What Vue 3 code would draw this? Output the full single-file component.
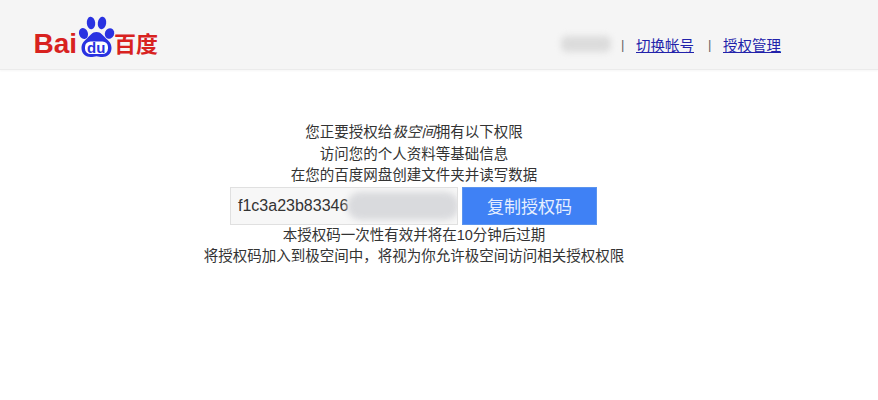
<script setup>
const lines = ['访问您的个人资料等基础信息', '在您的百度网盘创建文件夹并读写数据']
</script>

<template>
  <div class="page">
    <header class="header">
      <svg class="logo" width="128" height="48" viewBox="0 0 128 48">
        <text x="0.5" y="41" class="logo-red" font-size="28">Bai</text>
        <g fill="#2932e1">
          <ellipse cx="50.5" cy="21.5" rx="4.4" ry="5.6" transform="rotate(-20 50.5 21.5)" />
          <ellipse cx="58" cy="11" rx="4.2" ry="6.2" transform="rotate(-6 58 11)" />
          <ellipse cx="69" cy="11" rx="4.2" ry="6.2" transform="rotate(8 69 11)" />
          <ellipse cx="76.5" cy="21.5" rx="4.6" ry="5.4" transform="rotate(22 76.5 21.5)" />
          <path d="M63.5 20c4.5 0 6.500 3.500 9.500 6.500 3 2.500 5.500 5 5.500 9.500 0 6-4.500 9-9 9-2.500 0-4-.8-6-.8s-3.500.8-6 .8c-4.500 0-9-3-9-9 0-4.500 2.500-7 5.500-9.500 3-3 5-6.500 9.500-6.500z" />
        </g>
        <rect x="52" y="29.500" width="23" height="12.500" rx="5.500" fill="#fff" />
        <text x="54" y="40.500" class="logo-du" font-size="15">du</text>
        <text x="81" y="40" class="logo-cn" font-size="22">百度</text>
      </svg>
      <nav class="nav">
        <span class="user-blur"></span>
        <span class="sep">|</span>
        <a class="link">切换帐号</a>
        <span class="sep">|</span>
        <a class="link">授权管理</a>
      </nav>
    </header>

    <main class="main">
      <p class="line">您正要授权给<em class="app">极空间</em>拥有以下权限</p>
      <p v-for="l in lines" :key="l" class="line">{{ l }}</p>
      <div class="code-row">
        <div class="code-box">
          <span class="code">f1c3a23b83346</span>
          <span class="code-blur"></span>
        </div>
        <button class="copy">复制授权码</button>
      </div>
      <p class="line">本授权码一次性有效并将在10分钟后过期</p>
      <p class="line">将授权码加入到极空间中，将视为你允许极空间访问相关授权权限</p>
    </main>
  </div>
</template>

<style scoped>
.page {
  width: 878px;
  height: 400px;
  background: #fff;
  overflow: hidden;
  font-family: "Liberation Sans", "Noto Sans CJK SC", sans-serif;
  color: #333;
  font-size: 14.5px;
}
.header {
  height: 69px;
  box-sizing: content-box;
  background: #f5f5f5;
  border-bottom: 1px solid #ebebeb;
  box-shadow: 0 1px 2px rgba(0, 0, 0, 0.04);
  display: flex;
  align-items: flex-start;
  justify-content: space-between;
  padding-left: 33px;
  padding-right: 97px;
}
.logo {
  margin-top: 12px;
  display: block;
}
.logo-red {
  font-family: "Liberation Sans", sans-serif;
  font-weight: 700;
  fill: #d8221f;
}
.logo-du {
  font-family: "Liberation Sans", sans-serif;
  font-weight: 700;
  fill: #2932e1;
}
.logo-cn {
  font-family: "Noto Sans CJK SC", sans-serif;
  font-weight: 700;
  fill: #d8221f;
}
.nav {
  display: flex;
  align-items: center;
  height: 20px;
  margin-top: 34px;
  position: relative;
}
.user-blur {
  width: 50px;
  height: 16px;
  border-radius: 6px;
  background: #dcdcdc;
  filter: blur(3px);
  margin-right: 10px;
}
.sep {
  color: #666;
  width: 14px;
  margin-right: 1px;
  font-size: 13px;
}
.sep + .link + .sep {
  margin-left: 14px;
}
.link {
  color: #2222aa;
  text-decoration: underline;
}
.main {
  display: flex;
  flex-direction: column;
  align-items: center;
  padding-top: 52px;
  padding-right: 50px;
}
.line {
  margin: 0;
  height: 21.6px;
  line-height: 21.6px;
  white-space: nowrap;
}
.app {
  font-style: italic;
}
.code-row {
  display: flex;
  gap: 4px;
  height: 38px;
  margin-top: 0;
  margin-left: -1px;
}
.code-box {
  width: 228px;
  box-sizing: border-box;
  background: #f7f7f7;
  border: 1px solid #e0e0e0;
  position: relative;
  overflow: hidden;
  display: flex;
  align-items: center;
  padding-left: 7px;
  font-size: 16px;
  color: #333;
}
.code-blur {
  position: absolute;
  left: 116px;
  top: 4px;
  width: 112px;
  height: 28px;
  border-radius: 14px;
  background: #d9dadd;
  filter: blur(3px);
}
.copy {
  width: 135px;
  height: 38px;
  border: 1px solid #5b94ee;
  background: #3f81f5;
  color: #e6efff;
  font-family: inherit;
  font-size: 17px;
  padding: 0;
}
</style>
